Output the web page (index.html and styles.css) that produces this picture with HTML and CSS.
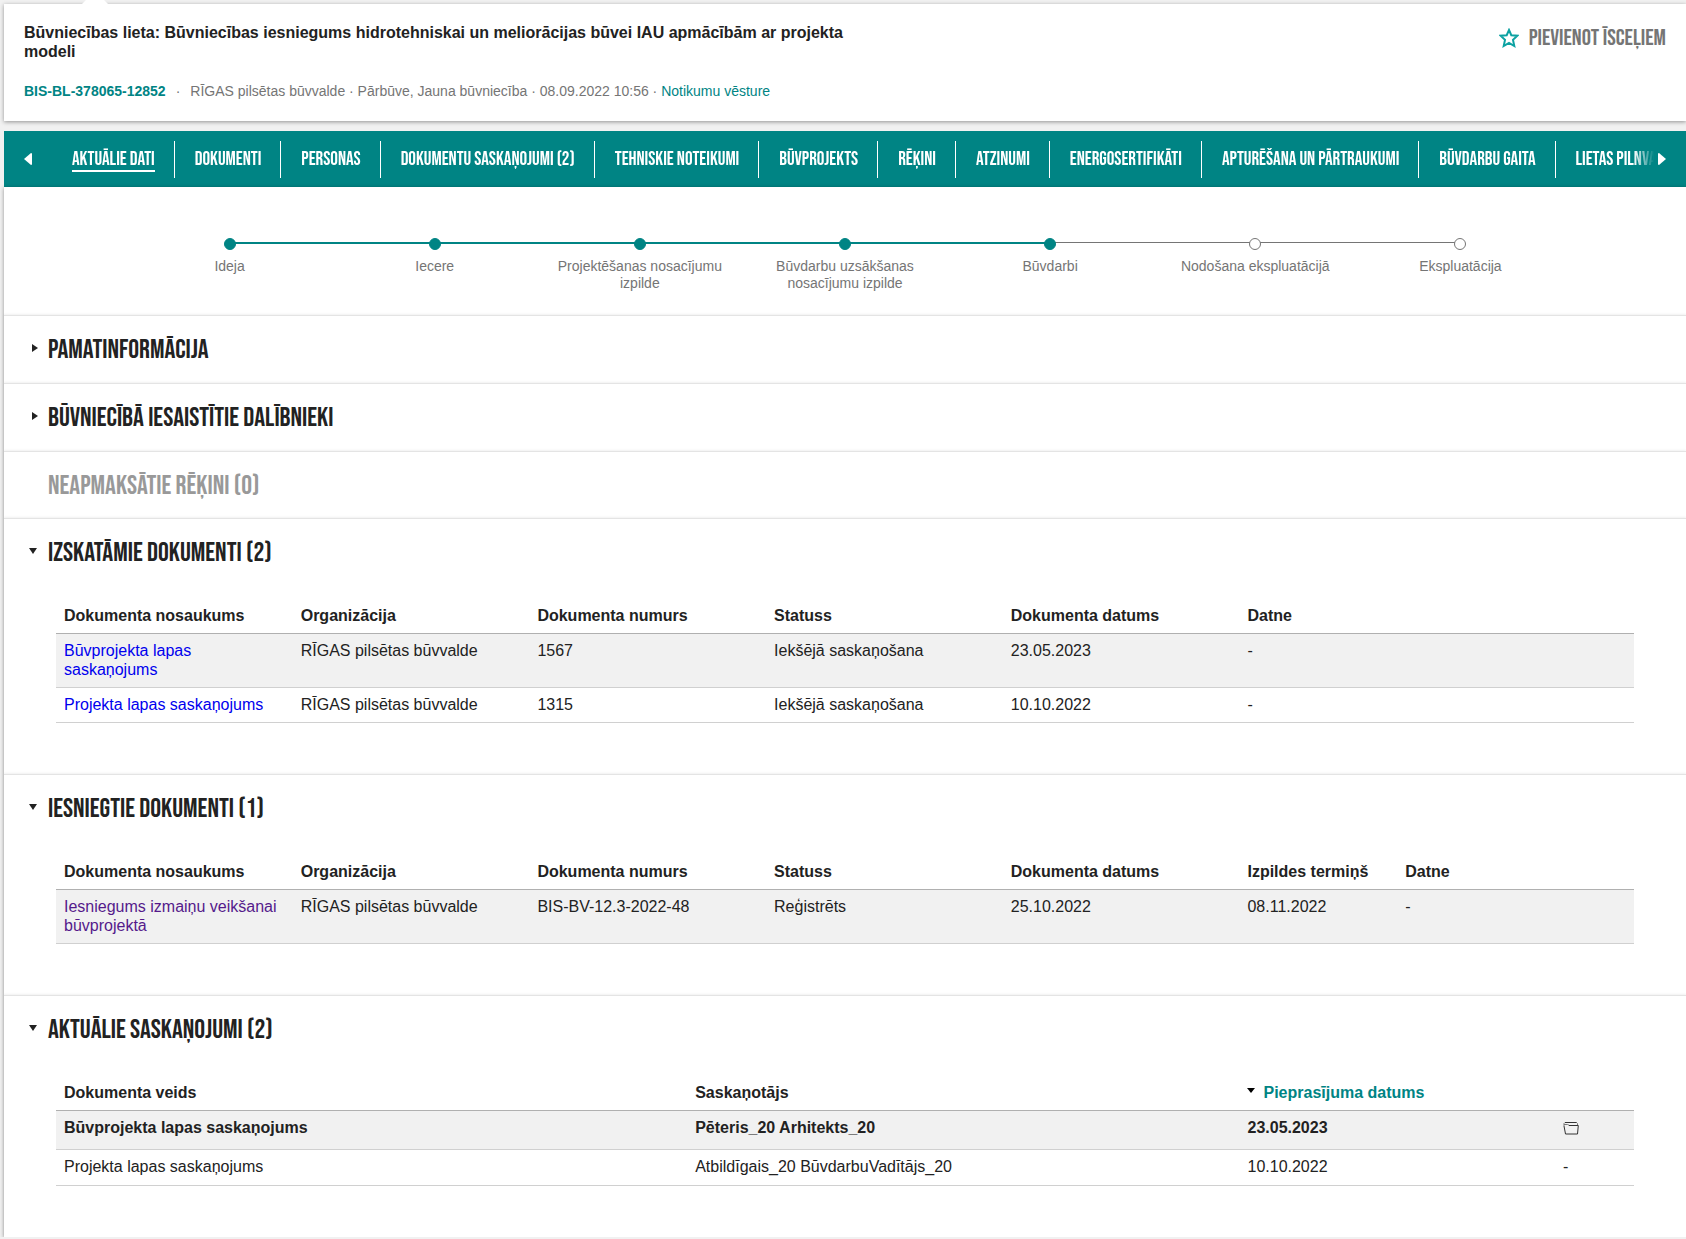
FILE: index.html
```html
<!DOCTYPE html>
<html lang="lv">
<head>
<meta charset="utf-8">
<title>Būvniecības lieta</title>
<link rel="stylesheet" href="styles.css">
</head>
<body>
<header class="case-header">
  <span class="pointer"></span>
  <div class="case-info">
    <h1 class="case-title">Būvniecības lieta: Būvniecības iesniegums hidrotehniskai un meliorācijas būvei IAU apmācībām ar projekta modeli</h1>
    <p class="case-meta"><strong class="case-number">BIS-BL-378065-12852</strong><span class="dot">·</span>RĪGAS pilsētas būvvalde · Pārbūve, Jauna būvniecība · 08.09.2022 10:56 · <a class="teal-link" href="#history">Notikumu vēsture</a></p>
  </div>
  <button class="shortcut" type="button">
    <svg class="star" viewBox="0 0 20 20" aria-hidden="true"><path d="M10 2 12.300 7.200 18.400 7.700 14 11.900 15.300 18 10 15 4.700 18 6 11.900 1.600 7.700 7.700 7.200z"/></svg>
    Pievienot īsceļiem
  </button>
</header>

<nav class="tabs">
  <button class="tab-arrow" type="button" aria-label="Iepriekšējie"><svg viewBox="0 0 8 12"><path d="M8 1Q8 0 7 0L0 6l7 6q1 0 1-1z"/></svg></button>
  <ul class="tab-list">
    <li><a class="active" href="#dati">Aktuālie dati</a></li>
    <li><a href="#dokumenti">Dokumenti</a></li>
    <li><a href="#personas">Personas</a></li>
    <li><a href="#saskanojumi">Dokumentu saskaņojumi (2)</a></li>
    <li><a href="#noteikumi">Tehniskie noteikumi</a></li>
    <li><a href="#projekts">Būvprojekts</a></li>
    <li><a href="#rekini">Rēķini</a></li>
    <li><a href="#atzinumi">Atzinumi</a></li>
    <li><a href="#energo">Energosertifikāti</a></li>
    <li><a href="#apturesana">Apturēšana un pārtraukumi</a></li>
    <li><a href="#gaita">Būvdarbu gaita</a></li>
    <li><a href="#pilnvaras">Lietas pilnvaras</a></li>
  </ul>
  <button class="tab-arrow next-tabs" type="button" aria-label="Nākamie"><svg viewBox="0 0 8 12"><path d="M0 1Q0 0 1 0l7 6-7 6q-1 0-1-1z"/></svg></button>
</nav>

<main class="content">
  <ol class="steps">
    <li class="done">Ideja</li>
    <li class="done">Iecere</li>
    <li class="done">Projektēšanas nosacījumu izpilde</li>
    <li class="done">Būvdarbu uzsākšanas nosacījumu izpilde</li>
    <li class="done current">Būvdarbi</li>
    <li>Nodošana ekspluatācijā</li>
    <li>Ekspluatācija</li>
  </ol>

  <details class="section">
    <summary><h2>Pamatinformācija</h2></summary>
  </details>
  <details class="section">
    <summary><h2>Būvniecībā iesaistītie dalībnieki</h2></summary>
  </details>
  <section class="section empty">
    <h2>Neapmaksātie rēķini (0)</h2>
  </section>

  <details class="section" open>
    <summary><h2>Izskatāmie dokumenti (2)</h2></summary>
    <table class="grid">
      <colgroup><col class="w15"><col class="w15"><col class="w15"><col class="w15"><col class="w15"><col></colgroup>
      <thead><tr><th>Dokumenta nosaukums</th><th>Organizācija</th><th>Dokumenta numurs</th><th>Statuss</th><th>Dokumenta datums</th><th>Datne</th></tr></thead>
      <tbody>
        <tr><td><a class="doc-link" href="#doc-1567">Būvprojekta lapas saskaņojums</a></td><td>RĪGAS pilsētas būvvalde</td><td>1567</td><td>Iekšējā saskaņošana</td><td>23.05.2023</td><td>-</td></tr>
        <tr><td><a class="doc-link" href="#doc-1315">Projekta lapas saskaņojums</a></td><td>RĪGAS pilsētas būvvalde</td><td>1315</td><td>Iekšējā saskaņošana</td><td>10.10.2022</td><td>-</td></tr>
      </tbody>
    </table>
  </details>

  <details class="section" open>
    <summary><h2>Iesniegtie dokumenti (1)</h2></summary>
    <table class="grid">
      <colgroup><col class="w15"><col class="w15"><col class="w15"><col class="w15"><col class="w15"><col class="w10"><col></colgroup>
      <thead><tr><th>Dokumenta nosaukums</th><th>Organizācija</th><th>Dokumenta numurs</th><th>Statuss</th><th>Dokumenta datums</th><th>Izpildes termiņš</th><th>Datne</th></tr></thead>
      <tbody>
        <tr><td><a class="doc-link seen" href="#doc-48">Iesniegums izmaiņu veikšanai būvprojektā</a></td><td>RĪGAS pilsētas būvvalde</td><td>BIS-BV-12.3-2022-48</td><td>Reģistrēts</td><td>25.10.2022</td><td>08.11.2022</td><td>-</td></tr>
      </tbody>
    </table>
  </details>

  <details class="section" open>
    <summary><h2>Aktuālie saskaņojumi (2)</h2></summary>
    <table class="grid approvals">
      <colgroup><col class="w40"><col class="w35"><col class="w20"><col></colgroup>
      <thead><tr><th>Dokumenta veids</th><th>Saskaņotājs</th><th><a class="sort teal-link" href="#sort">Pieprasījuma datums</a></th><th></th></tr></thead>
      <tbody>
        <tr class="unread"><td>Būvprojekta lapas saskaņojums</td><td>Pēteris_20 Arhitekts_20</td><td>23.05.2023</td><td><button class="folder" type="button" aria-label="Atvērt datni"><svg viewBox="0 0 16 13"><path class="back" d="M1 4V1.500L2 .5h11.500l1 1v2M1 2.500h3.500l2 1"/><path d="M2 .5h11.500M6 3.500h9.300L14.500 12h-12L1 4"/></svg></button></td></tr>
        <tr><td>Projekta lapas saskaņojums</td><td>Atbildīgais_20 BūvdarbuVadītājs_20</td><td>10.10.2022</td><td>-</td></tr>
      </tbody>
    </table>
  </details>
</main>
</body>
</html>
```
FILE: styles.css
```css
:root {
  --display-font: "Bebas Neue", "Roboto Condensed", Roboto, sans-serif;
}

* {
  box-sizing: border-box;
}

body {
  margin: 0;
  padding: 4px 0 0 4px;
  background: #f1f1f1;
  color: #222;
  font: 16px/19px "Liberation Sans", Arial, sans-serif;
  overflow-x: hidden;
}

h1,
h2,
p,
ul,
ol {
  margin: 0;
  padding: 0;
}

ul,
ol {
  list-style: none;
}

a {
  text-decoration: none;
}

button {
  padding: 0;
  border: 0;
  background: none;
  cursor: pointer;
}

.teal-link {
  color: #008484;
}

/* Case header */
.case-header {
  position: relative;
  display: flex;
  justify-content: space-between;
  align-items: flex-start;
  padding: 19px 20px 20px;
  background: #fff;
  box-shadow: 0 1px 4px rgba(0, 0, 0, 0.4);
}

.pointer {
  position: absolute;
  top: -13px;
  left: 78px;
  width: 26px;
  height: 13px;
  background: #fff;
  clip-path: polygon(50% 0, 100% 100%, 0 100%);
}

.case-info {
  max-width: 830px;
}

.case-title {
  font-size: 16px;
  line-height: 19px;
}

.case-meta {
  margin-top: 21px;
  color: #757575;
  font-size: 14px;
  line-height: 19px;
}

.case-number {
  color: #008484;
}

.dot {
  margin: 0 10px;
}

.shortcut {
  display: flex;
  align-items: center;
  gap: 10px;
  padding-top: 4px;
  color: #757575;
  font: 23px/22px var(--display-font);
  text-transform: uppercase;
}

.star {
  width: 20px;
  height: 20px;
  fill: none;
  stroke: #0da2a2;
  stroke-width: 2;
}

/* Tabs */
.tabs {
  display: flex;
  align-items: center;
  height: 56px;
  margin-top: 10px;
  background: #008484;
}

.tab-arrow {
  flex: none;
  display: flex;
  padding: 0 20px;
}

.tab-arrow.next-tabs {
  padding-left: 4px;
}

.tab-arrow svg {
  width: 8px;
  height: 12px;
  fill: #fff;
}

.tab-list {
  flex: 1;
  display: flex;
  overflow: hidden;
  white-space: nowrap;
  mask-image: linear-gradient(to left, transparent, #000 20px);
}

.tab-list li {
  padding: 9px 19px 6px 20px;
  border-right: 1px solid #fff;
}

.tab-list a {
  display: block;
  border-bottom: 2px solid transparent;
  color: #fff;
  font: 19px/20px var(--display-font);
  text-transform: uppercase;
}

.tab-list .active {
  border-color: #fff;
}

/* Progress steps */
.content {
  background: #fff;
  box-shadow: 0 1px 4px rgba(0, 0, 0, 0.4);
}

.steps {
  display: flex;
  padding: 51px 123px 23px;
  color: #757575;
  font-size: 14px;
  line-height: 17px;
  text-align: center;
}

.steps li {
  position: relative;
  flex: 1 1 0;
  padding: 20px 16px 0;
}

.steps li::before {
  content: "";
  position: absolute;
  z-index: 1;
  top: 0;
  left: calc(50% - 6px);
  width: 10px;
  height: 10px;
  border: 1px solid #757575;
  border-radius: 50%;
  background: #fff;
}

.steps li::after {
  content: "";
  position: absolute;
  top: 4px;
  left: 50%;
  width: 100%;
  border-top: 1px solid #757575;
}

.steps li:last-child::after {
  display: none;
}

.steps .done::before {
  border-color: #008484;
  background: #008484;
}

.steps .done::after {
  border-top: 2px solid #008484;
}

.steps .current::after {
  border-top: 1px solid #757575;
}

/* Sections */
.section {
  padding: 20px 52px 0;
  border-top: 1px solid #e4e4e4;
  box-shadow: 0 -1px 2px rgba(0, 0, 0, 0.06);
}

.section h2 {
  margin-left: -8px;
  padding-bottom: 19px;
  font: 27px/28px var(--display-font);
  text-transform: uppercase;
}

.section summary {
  position: relative;
  display: block;
  cursor: pointer;
}

.section summary::before {
  content: "";
  position: absolute;
  top: 8px;
  left: -24px;
  border: 4px solid transparent;
  border-right-width: 0;
  border-left: 6px solid #222;
}

.section[open] > summary::before {
  top: 9px;
  left: -27px;
  border: 4px solid transparent;
  border-top: 6px solid #222;
  border-bottom-width: 0;
}

.section[open] {
  padding-bottom: 51px;
}

.empty {
  color: #999;
}

.empty h2 {
  padding-bottom: 18px;
}

/* Tables */
.grid {
  width: 100%;
  margin-top: 13px;
  border-collapse: separate;
  border-spacing: 0;
  table-layout: fixed;
}

.w10 { width: 10%; }
.w15 { width: 15%; }
.w20 { width: 20%; }
.w35 { width: 35%; }
.w40 { width: 40%; }

.grid th,
.grid td {
  padding: 7px 8px 8px;
  border-bottom: 1px solid #d0d0d0;
  text-align: left;
  vertical-align: top;
}

.grid th {
  border-color: #b0b0b0;
}

.grid tbody tr:nth-child(odd) {
  background: #f1f1f1;
}

.approvals td {
  padding-bottom: 9px;
}

.unread {
  font-weight: bold;
}

.doc-link {
  color: #00e;
}

.doc-link.seen {
  color: #551a8b;
}

.sort::before {
  content: "";
  display: inline-block;
  margin-right: 8px;
  border: 4px solid transparent;
  border-top: 5px solid #000;
  border-bottom-width: 0;
  vertical-align: 5px;
}

.folder {
  display: block;
  padding: 4px 0 5px;
}

.folder svg {
  display: block;
  width: 16px;
  height: 13px;
  fill: none;
  stroke: #333;
}

.folder .back {
  stroke: #777;
}
```
